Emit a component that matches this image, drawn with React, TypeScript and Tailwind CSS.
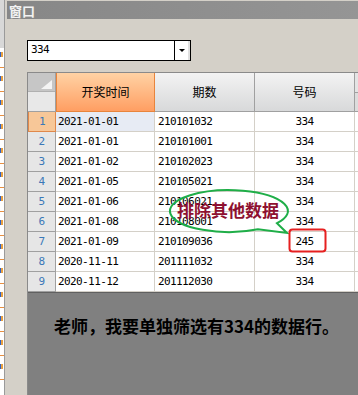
import React from "react";

const rows: [string, string, string][] = [
  ["2021-01-01", "210101032", "334"],
  ["2021-01-01", "210101001", "334"],
  ["2021-01-02", "210102023", "334"],
  ["2021-01-05", "210105021", "334"],
  ["2021-01-06", "210106021", "334"],
  ["2021-01-08", "210108001", "334"],
  ["2021-01-09", "210109036", "245"],
  ["2020-11-11", "201111032", "334"],
  ["2020-11-12", "201112030", "334"],
];

const cjk = { fontFamily: '"Noto Sans CJK SC", "Noto Sans", sans-serif' };
const mono = { fontFamily: '"DejaVu Sans Mono", "Liberation Mono", monospace' };

export default function App() {
  return (
    <div className="relative w-[358px] h-[395px] overflow-hidden flex bg-[#d4d0c8]" style={cjk}>
      {/* left sliver of another window */}
      <div className="w-[5px] flex flex-col border-r border-[#9a9a9a] bg-white">
        <div className="h-[48px] bg-[#d8d8d8]" />
        {Array.from({ length: 14 }).map((_, i) => (
          <div key={i} className="h-[24px] flex flex-col justify-between py-[4px]">
            <div className="w-[3px] h-[5px] bg-[#e8a040] border-l border-[#3060c0]" />
            <div className="w-[4px] h-px bg-[#e89040]" />
          </div>
        ))}
      </div>

      <div className="flex-1 flex flex-col min-w-0">
        {/* title bar */}
        <div className="ml-[2px] mt-[1px] h-[18px] bg-gradient-to-r from-[#878787] to-[#959595] flex items-center pl-[2px] text-[13px] font-bold text-[#f2f2f2] leading-none">
          窗口
        </div>

        <div className="flex-1 flex flex-col pl-[22px]">
          {/* combobox */}
          <div className="mt-[21px] w-[164px] h-[21px] flex bg-white border border-black">
            <div className="flex-1 flex items-center pl-[3px] text-[11px] tracking-[-0.6px] text-black" style={mono}>
              334
            </div>
            <div className="w-[16px] h-full flex items-center justify-center border-l border-black bg-white border-r-2 border-r-[#e0e0e0]">
              <div className="w-0 h-0 border-l-[3px] border-r-[3px] border-t-[3px] border-l-transparent border-r-transparent border-t-black" />
            </div>
          </div>

          {/* grid */}
          <div className="mt-[11px] flex-1 flex flex-col border-l border-[#8a8a8a]">
            {/* header */}
            <div className="h-[40px] flex border-t border-[#8a8a8a]">
              <div className="w-[28px] flex flex-col border-r border-[#a0a0a0]">
                <div className="h-[19px] bg-[#c6c6c6] relative border-b border-[#b0b0b0]">
                  <div className="absolute right-[3px] bottom-[2px] w-0 h-0 border-l-[11px] border-t-[9px] border-l-transparent border-t-transparent border-b-0 border-r-0" style={{ borderBottom: "9px solid #f4f4f4", borderTopWidth: 0 }} />
                </div>
                <div className="flex-1 bg-[#e8e8e8] border-b border-[#a0a0a0]" />
              </div>
              <div className="w-[99px] flex items-center justify-center text-[12px] text-black bg-gradient-to-b from-[#ffd2a4] to-[#ff9e62] border border-[#e8843c] border-t-0">
                开奖时间
              </div>
              <div className="w-[100px] flex items-center justify-center text-[12px] text-black bg-gradient-to-b from-[#f3f3f3] to-[#d8d9da] border-r border-b border-[#a0a0a0]">
                期数
              </div>
              <div className="w-[100px] flex items-center justify-center text-[12px] text-black bg-gradient-to-b from-[#f3f3f3] to-[#d8d9da] border-r border-b border-[#a0a0a0]">
                号码
              </div>
              <div className="flex-1 flex flex-col">
                <div className="h-[20px] bg-[#e4e4e4] border-b border-[#a0a0a0]" />
                <div className="flex-1 bg-[#dcdcdc] border-b border-[#a0a0a0]" />
              </div>
            </div>

            {/* rows */}
            {rows.map((r, i) => {
              const sel = i === 0;
              return (
                <div key={i} className="h-[20px] flex text-[11px] tracking-[-0.6px] text-black leading-none" style={mono}>
                  <div
                    className={
                      sel
                        ? "w-[28px] flex items-center justify-center bg-[#f7c798] border border-[#e0884a] border-t-0 text-[#3a78b8]"
                        : "w-[28px] flex items-center justify-center bg-[#e6e6e6] border-r border-b border-[#a0a0a0] text-[#3a78b8]"
                    }
                  >
                    {i + 1}
                  </div>
                  <div className={(sel ? "bg-[#e7ebf4] " : "bg-white ") + "w-[99px] flex items-center pl-[2px] border-r border-b border-[#d4d0c8]"}>
                    {r[0]}
                  </div>
                  <div className="w-[100px] flex items-center pl-[3px] bg-white border-r border-b border-[#d4d0c8]">
                    {r[1]}
                  </div>
                  <div className="w-[100px] flex items-center justify-center bg-white border-r border-b border-[#d4d0c8]">
                    {r[2]}
                  </div>
                  <div className="flex-1 bg-white border-b border-[#d4d0c8]" />
                </div>
              );
            })}

            {/* empty grey area */}
            <div className="flex-1 bg-[#808080] border-t border-[#606060] pl-[26px] pt-[23px]">
              <div className="text-[17px] font-bold text-black leading-[20px] whitespace-nowrap">
                老师，我要单独筛选有334的数据行。
              </div>
            </div>
          </div>
        </div>
      </div>

      {/* callout overlay */}
      <svg className="absolute left-0 top-0 pointer-events-none" width="358" height="395">
        <path
          d="M 258 229.3 A 59 21 0 1 1 277 223.2 L 287 233 L 258 229.3 Z"
          fill="none"
          stroke="#1fae48"
          strokeWidth="2"
        />
        <rect x="289.5" y="229.5" width="36" height="22" rx="3" fill="none" stroke="#e62020" strokeWidth="2" />
      </svg>
      <div className="absolute left-[177px] top-[200px] text-[17px] font-bold text-[#8e1030] leading-[20px] whitespace-nowrap pointer-events-none">
        排除其他数据
      </div>
    </div>
  );
}
